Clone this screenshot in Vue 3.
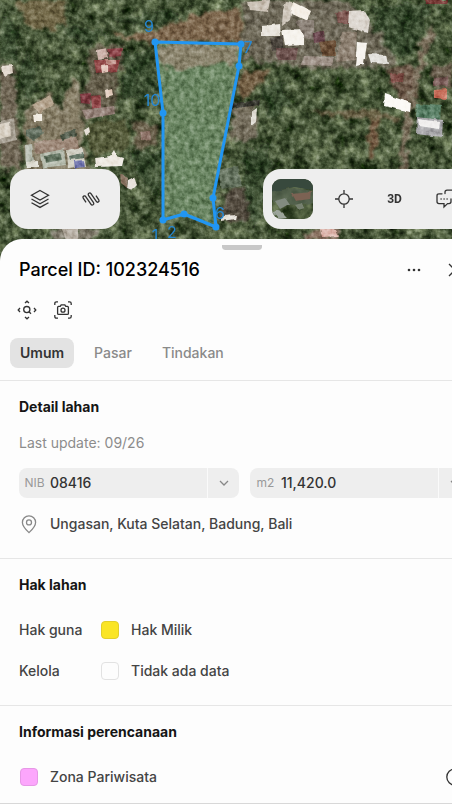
<script setup>
// Parcel detail: satellite map on top, bottom sheet with the land data below.
import { ref } from 'vue'

const tabs = ['Umum', 'Pasar', 'Tindakan']
const activeTab = ref('Umum')

const fields = ref([
  { id: 'nib', label: 'NIB', value: '08416' },
  { id: 'area', label: 'm2', value: '11,420.0' },
])

const rights = [
  { label: 'Hak guna', value: 'Hak Milik', kind: 'yellow' },
  { label: 'Kelola', value: 'Tidak ada data', kind: 'empty' },
]

// open ground and roads
const ground = [
  { d: 'M18 0H64L66 24L52 30L30 28L20 16Z', c: '#77694a' },
  { d: 'M110 36L150 33L190 16L240 8L243 42L156 42L128 40Z', c: '#85674f' },
  { d: 'M0 66L12 64L18 120L22 170L0 168Z', c: '#77695a' },
  { d: 'M30 105L50 94L60 108L74 76L80 90L84 150L92 172L26 172L24 130Z', c: '#8d806b' },
  { d: 'M88 48L124 42L122 66L114 86L116 112L84 120L78 98L90 84Z', c: '#655a48' },
  { d: 'M86 122L126 120L130 148L92 158Z', c: '#595b3b' },
  { d: 'M132 120L156 126L158 146L136 150Z', c: '#6a5b4a' },
  { d: 'M242 2L300 0L350 2L380 36L396 66L352 68L300 68L244 58Z', c: '#736a5c' },
  { d: 'M240 72L272 69L262 82L246 98L238 96Z', c: '#765b43' },
  { d: 'M234 106L258 104L256 138L230 142Z', c: '#7d7264' },
  { d: 'M226 190L246 188L248 222L222 222Z', c: '#55483f' },
  { d: 'M306 112L372 110L400 114L402 120L334 117Z', c: '#6c5f44' },
  { d: 'M370 118L380 116L376 150L368 162Z', c: '#76573f' },
  { d: 'M386 68L414 66L420 98L398 100Z', c: '#6f5748' },
  { d: 'M424 32L436 26L420 76L412 114L406 172L398 172L405 116L414 74Z', c: '#857463' },
  { d: 'M432 66L452 64V88L436 90Z', c: '#6e5d50' },
  { d: 'M50 229H100L94 240H56Z', c: '#8a8176' },
  { d: 'M312 229H340L338 240H306Z', c: '#947468' },
]

// denser, darker trees
const shade = [
  'M0 20L16 18L18 60L0 62Z',
  'M20 64L28 50L40 88L30 100L20 90Z',
  'M64 26L110 30L90 44L66 34Z',
  'M122 54L152 48L158 88L150 110L124 96Z',
  'M128 150L160 150L160 200L136 172Z',
  'M372 6L430 4L424 30L410 56L392 58L376 30Z',
  'M260 92L280 78L290 104L272 120Z',
  'M246 150L268 142L270 170L258 230L244 210Z',
  'M180 20L140 28L110 20L170 10Z',
]

const roofs = [
  { d: 'M2 66L12 65L13 73L4 76Z', c: '#dfd6cb' },
  { d: 'M0 121L14 118L16 140L0 144Z', c: '#a8a194' },
  { d: 'M0 124L10 122L11 136L0 139Z', c: '#d7cfc2' },
  { d: 'M32 106L50 95L54 104L40 113Z', c: '#b3a28c' },
  { d: 'M33 114L42 113L42 121L34 121Z', c: '#eee8dd' },
  { d: 'M26 130L40 126L44 134L34 140L26 137Z', c: '#5d6a5a' },
  { d: 'M34 142L76 137L80 150L36 154Z', c: '#9c8777' },
  { d: 'M40 154L64 149L66 165L42 168Z', c: '#b4baac' },
  { d: 'M44 156L60 153L62 160L45 163Z', c: '#5e705d' },
  { d: 'M67 150L82 147L86 166L68 168Z', c: '#d0cec2' },
  { d: 'M69 156L83 153L84 158L70 160Z', c: '#67796b' },
  { d: 'M74 161L84 160L85 167L75 168Z', c: '#666aa5' },
  { d: 'M25 145L32 144L34 162L26 166Z', c: '#b5baae' },
  { d: 'M26 162L38 161V168H27Z', c: '#dedcd2' },
  { d: 'M60 134L76 129L77 136L62 140Z', c: '#4c5544' },
  { d: 'M95 158L110 156L114 150L117 156L124 158L122 166L96 167Z', c: '#eee9e2' },
  { d: 'M97 50L106 48L108 58L98 60Z', c: '#cfb5ad' },
  { d: 'M107 49L122 48L121 56L109 57Z', c: '#884044' },
  { d: 'M94 60L120 60L117 71L96 73Z', c: '#93494a' },
  { d: 'M101 66L108 65L108 72L102 73Z', c: '#e0c2b7' },
  { d: 'M106 60L116 60L116 64L108 65Z', c: '#bf8f87' },
  { d: 'M80 94L91 93L90 104L81 103Z', c: '#803a42' },
  { d: 'M91 96L101 95L101 108L92 109Z', c: '#91474a' },
  { d: 'M105 91L112 89L113 96L106 98Z', c: '#e3cfc1' },
  { d: 'M82 110L114 106L115 114L86 119Z', c: '#927f76' },
  { d: 'M84 130L89 127L90 132L86 136Z', c: '#e4ddd4' },
  { d: 'M128 180L134 177L137 185L132 190L127 188Z', c: '#e6dfd9' },
  { d: 'M120 174L128 178L127 188L121 183Z', c: '#806a58' },
  { d: 'M140 132L150 131L151 140L142 141Z', c: '#8b6f65' },
  { d: 'M248 2L270 0L268 12L250 10Z', c: '#c8bfb3' },
  { d: 'M286 2L293 3L290 20L282 26L283 10Z', c: '#cfc7bc' },
  { d: 'M293 2L311 11L307 21L290 13Z', c: '#f5efe6' },
  { d: 'M262 26L280 24L281 36L262 36Z', c: '#e8e4dc' },
  { d: 'M282 30L304 29L304 44L285 45Z', c: '#f5f2ec' },
  { d: 'M270 38L283 36L283 48L273 50Z', c: '#4c443d' },
  { d: 'M296 20L314 20L314 40L304 38Z', c: '#8a8076' },
  { d: 'M313 32L324 31L325 42L314 43Z', c: '#654248' },
  { d: 'M319 42L336 40L336 56L322 56Z', c: '#694d35' },
  { d: 'M336 12L350 11L348 24L338 24Z', c: '#7c5550' },
  { d: 'M349 11L364 10L370 20L368 33L348 27Z', c: '#dcd6cf' },
  { d: 'M342 32L357 31L355 60L336 62Z', c: '#8d8071' },
  { d: 'M357 42L367 43L364 64L355 66Z', c: '#f6f3ee' },
  { d: 'M368 54L386 55L388 64L371 63Z', c: '#e2e0db' },
  { d: 'M304 56L334 57L332 66L302 65Z', c: '#9d9086' },
  { d: 'M276 48L298 48L296 60L278 60Z', c: '#6b4f4b' },
  { d: 'M385 94L411 103L410 112L384 106Z', c: '#fbf9f5' },
  { d: 'M390 74L404 73L403 82L391 82Z', c: '#7a4a42' },
  { d: 'M417 104L441 106L440 120L416 117Z', c: '#52795e' },
  { d: 'M417 117L443 120L442 137L416 134Z', c: '#aaa9ac' },
  { d: 'M418 119L440 122L439 129L419 126Z', c: '#f0eeed' },
  { d: 'M434 90L447 89L447 99L434 98Z', c: '#c8705c' },
  { d: 'M434 78L448 77L448 86L434 86Z', c: '#715350' },
  { d: 'M424 0H448L446 4H426Z', c: '#6e302e' },
  { d: 'M251 112L257 108L256 122L251 126Z', c: '#dfdbd3' },
  { d: 'M226 104L260 100L259 105L230 109Z', c: '#31302a' },
  { d: 'M218 170L238 166L242 186L222 190Z', c: '#64715d' },
  { d: 'M222 216L236 215L235 219L222 221Z', c: '#e5e0d8' },
  { d: 'M320 229L334 229L339 236L322 237Z', c: '#ddb7ae' },
  { d: 'M62 229L78 229L78 240L66 240Z', c: '#b5ada2' },
]

const parcel = [
  [155, 42],
  [241, 44],
  [239, 66],
  [213, 198],
  [216, 227],
  [184, 214],
  [163, 220],
  [163, 113],
]
const outline = parcel.map((p) => p.join(',')).join(' ')

const vertexLabels = [
  { n: '9', x: 149, y: 32 },
  { n: '7', x: 248, y: 53 },
  { n: '10', x: 152, y: 106 },
  { n: '1', x: 155, y: 241 },
  { n: '2', x: 172, y: 238 },
  { n: '6', x: 220, y: 219 },
]
</script>

<template>
  <div class="screen">
    <div class="canvas">
      <div class="map">
        <svg class="satellite" viewBox="0 0 452 262" preserveAspectRatio="xMidYMin slice" aria-hidden="true">
          <defs>
            <filter id="canopy" x="0" y="0" width="100%" height="100%" color-interpolation-filters="sRGB">
              <feTurbulence type="fractalNoise" baseFrequency="0.075" numOctaves="4" seed="7" />
              <feColorMatrix values="0.7 0 0 0 -0.08  0.7 0 0 0 -0.02  0.6 0 0 0 -0.09  0 0 0 0 1" />
              <feGaussianBlur stdDeviation="0.7" />
            </filter>
            <filter id="grain" x="0" y="0" width="100%" height="100%" color-interpolation-filters="sRGB">
              <feTurbulence type="fractalNoise" baseFrequency="0.2" numOctaves="3" seed="3" />
              <feColorMatrix values="1 0 0 0 0.03  1 0 0 0 0.03  1 0 0 0 0.03  0 0 0 0 1" />
            </filter>
            <filter id="rough" x="0" y="0" width="100%" height="100%">
              <feTurbulence type="fractalNoise" baseFrequency="0.1" numOctaves="3" seed="5" result="n" />
              <feDisplacementMap in="SourceGraphic" in2="n" scale="14" xChannelSelector="R" yChannelSelector="G" />
              <feGaussianBlur stdDeviation="1.2" />
            </filter>
            <filter id="soft" x="0" y="0" width="100%" height="100%">
              <feTurbulence type="fractalNoise" baseFrequency="0.1" numOctaves="2" seed="2" result="n" />
              <feDisplacementMap in="SourceGraphic" in2="n" scale="3" xChannelSelector="R" yChannelSelector="G" />
              <feGaussianBlur stdDeviation="0.7" />
            </filter>
          </defs>
          <rect width="452" height="262" filter="url(#canopy)" />
          <g filter="url(#rough)" opacity="0.85">
            <rect width="452" height="262" fill="none" />
            <path v-for="s in shade" :key="s" :d="s" fill="#1d2b1d" fill-opacity="0.45" />
            <path v-for="g in ground" :key="g.d" :d="g.d" :fill="g.c" />
          </g>
          <g filter="url(#soft)">
            <rect width="452" height="262" fill="none" />
            <path v-for="r in roofs" :key="r.d" :d="r.d" :fill="r.c" />
          </g>
          <polygon :points="outline" fill="#6c8864" fill-opacity="0.9" />
          <path class="bare" d="M157 44L240 45L236 66L200 62L180 72L160 66Z" filter="url(#rough)" />
          <rect class="grain" width="452" height="262" filter="url(#grain)" />
          <polygon class="outline" :points="outline" />
          <circle v-for="p in parcel" :key="p.join()" :cx="p[0]" :cy="p[1]" r="3.5" fill="#2196f3" />
          <text v-for="v in vertexLabels" :key="v.n" class="vertex" :x="v.x" :y="v.y">{{ v.n }}</text>
        </svg>

        <div class="toolbars">
          <div class="toolbar">
            <button type="button" class="tool" aria-label="Layer">
              <svg width="20" height="20" viewBox="0 0 20 20">
                <path d="M10 1.5L18.5 6.2L10 11L1.5 6.2ZM1.5 10L10 14.7L18.5 10M1.5 13.7L10 18.4L18.5 13.7" />
              </svg>
            </button>
            <button type="button" class="tool" aria-label="Ukur">
              <svg width="20" height="20" viewBox="0 0 20 20">
                <path
                  transform="rotate(-34 10 10)"
                  d="M4 10V5A1.5 1.5 0 0 1 7 5V14.5A1.5 1.5 0 0 0 10 14.5V5.5A1.5 1.5 0 0 1 13 5.5V15A1.5 1.5 0 0 0 16 15V10"
                />
              </svg>
            </button>
          </div>

          <div class="toolbar">
            <button type="button" class="tool basemap" aria-label="Peta dasar">
              <svg width="41" height="41" viewBox="0 0 41 41">
                <rect width="41" height="41" filter="url(#canopy)" stroke="none" />
                <g filter="url(#soft)" stroke="none">
                  <path d="M0 0H41V11L22 8L0 13Z" fill="#38483e" />
                  <path d="M0 12L22 9L41 12V24L20 26L0 23Z" fill="#566351" fill-opacity="0.7" />
                  <path d="M20 15L39 13L38 20L24 22Z" fill="#7b6253" />
                  <path d="M3 22L13 19L17 25L8 30Z" fill="#828b80" />
                  <path d="M1 33L7 31L15 39L7 40Z" fill="#9ca49a" />
                  <path d="M22 26L31 24L33 29L26 31Z" fill="#77816f" />
                </g>
              </svg>
            </button>
            <button type="button" class="tool" aria-label="Lokasi saya">
              <svg width="20" height="20" viewBox="0 0 20 20">
                <circle cx="10" cy="10" r="5.2" />
                <path d="M10 1V4.8M10 15.2V19M1 10H4.8M15.2 10H19" />
              </svg>
            </button>
            <button type="button" class="tool three-d">3D</button>
            <button type="button" class="tool" aria-label="Komentar">
              <svg width="22" height="20" viewBox="0 0 22 20" stroke-linecap="round">
                <path d="M7 4.8H4Q2 4.8 2 6.8V12.6Q2 14.6 4 14.6H9V18L12.6 14.6H14Q16 14.6 16 12.6V10" />
                <path d="M10 4.6V3.2Q10 1.2 12 1.2H19Q21 1.2 21 3.2V9Q21 11 19 11H18.6" />
                <path d="M6 10H6.2M9 10H9.2M12 10H12.2" />
              </svg>
            </button>
          </div>
        </div>
      </div>

      <main class="sheet">
        <div class="handle"></div>
        <header class="head">
          <h1>Parcel ID: 102324516</h1>
          <button type="button" class="icon-btn" aria-label="Menu">
            <svg width="16" height="16" viewBox="0 0 16 16">
              <g fill="#333" stroke="none">
                <circle cx="3" cy="8" r="1.3" />
                <circle cx="8" cy="8" r="1.3" />
                <circle cx="13" cy="8" r="1.3" />
              </g>
            </svg>
          </button>
          <button type="button" class="icon-btn" aria-label="Tutup">
            <svg width="16" height="16" viewBox="0 0 16 16"><path d="M2 2L14 14M14 2L2 14" /></svg>
          </button>
        </header>

        <div class="actions">
          <button type="button" class="icon-btn" aria-label="Perbesar ke lahan">
            <svg width="20" height="20" viewBox="0 0 20 20">
              <circle cx="9.8" cy="9.6" r="3.1" />
              <path d="M12 11.8L14 13.8M8 3L10 1.2L12 3M8 17L10 18.8L12 17M3 8L1.2 10L3 12M17 8L18.8 10L17 12" />
            </svg>
          </button>
          <button type="button" class="icon-btn" aria-label="Ambil gambar">
            <svg width="20" height="20" viewBox="0 0 20 20">
              <path d="M1.8 5V3.4Q1.8 1.8 3.4 1.8H5M15 1.8H16.6Q18.2 1.8 18.2 3.4V5M18.2 15V16.6Q18.2 18.2 16.6 18.2H15M5 18.2H3.4Q1.8 18.2 1.8 16.6V15" />
              <path d="M4.6 7.4Q4.6 6.4 5.6 6.4H7.2L8.2 4.8H11.8L12.8 6.4H14.4Q15.4 6.4 15.4 7.4V13.4Q15.4 14.4 14.4 14.4H5.6Q4.6 14.4 4.6 13.4Z" />
              <circle cx="10" cy="10.2" r="2" />
            </svg>
          </button>
        </div>

        <nav class="tabs">
          <button
            v-for="t in tabs"
            :key="t"
            type="button"
            class="tab"
            :class="{ active: t === activeTab }"
            @click="activeTab = t"
          >{{ t }}</button>
        </nav>

        <section class="section">
          <h2>Detail lahan</h2>
          <p class="updated">Last update: 09/26</p>
          <div class="fields">
            <div v-for="f in fields" :key="f.id" class="field">
              <label :for="f.id">{{ f.label }}</label>
              <input :id="f.id" v-model="f.value" type="text" />
              <button type="button" :aria-label="'Pilih ' + f.label">
                <svg width="10" height="6" viewBox="0 0 10 6"><path d="M1 1L5 5L9 1" /></svg>
              </button>
            </div>
          </div>
          <p class="line">
            <svg class="pin" width="20" height="20" viewBox="0 0 20 20">
              <path d="M10 18.6C6.6 15.4 3.4 12.2 3.4 8.4A6.6 6.6 0 0 1 16.6 8.4C16.6 12.2 13.4 15.4 10 18.6Z" />
              <circle cx="10" cy="8.4" r="2.5" />
            </svg>
            <span>Ungasan, Kuta Selatan, Badung, Bali</span>
          </p>
        </section>

        <section class="section">
          <h2>Hak lahan</h2>
          <dl class="rows">
            <div v-for="r in rights" :key="r.label" class="row">
              <dt>{{ r.label }}</dt>
              <dd class="line"><i class="swatch" :class="r.kind"></i>{{ r.value }}</dd>
            </div>
          </dl>
        </section>

        <section class="section">
          <h2>Informasi perencanaan</h2>
          <div class="rows">
            <div class="line">
              <i class="swatch pink"></i>
              <span class="grow">Zona Pariwisata</span>
              <button type="button" class="icon-btn info" aria-label="Info zona">
                <svg width="20" height="20" viewBox="0 0 20 20">
                  <circle cx="10" cy="10" r="8.2" />
                  <path d="M10 9V14.4M10 5.8V7" />
                </svg>
              </button>
            </div>
          </div>
        </section>
      </main>
    </div>
  </div>
</template>

<style>
body {
  background: #fdfdfd;
}
</style>

<style scoped>
.screen {
  overflow: hidden;
  min-height: 100vh;
}

/* slightly wider than the viewport, runs off the right edge */
.canvas {
  width: calc(100% + 32px);
  color: #444;
  font-family: Inter, 'Liberation Sans', sans-serif;
  font-size: 14px;
  line-height: 20px;
}

h1,
h2,
p,
dl,
dd {
  margin: 0;
}

button,
input {
  font: inherit;
  color: inherit;
  border: 0;
  padding: 0;
  background: none;
}

svg {
  display: block;
  flex: none;
  fill: none;
  stroke: #333;
  stroke-width: 1.3;
}

.map {
  display: grid;
  height: 262px;
  overflow: hidden;
  background: #3c4834;
}

.satellite {
  grid-area: 1 / 1;
  width: calc(100% - 32px);
  height: 262px;
  stroke: none;
}

.bare {
  fill: #93826f;
  fill-opacity: 0.75;
}

.grain {
  mix-blend-mode: soft-light;
}

.outline {
  stroke: #2196f3;
  stroke-width: 3;
  stroke-linejoin: round;
}

.vertex {
  fill: #2587d3;
  font-size: 16px;
  text-anchor: middle;
}

.toolbars {
  grid-area: 1 / 1;
  z-index: 1;
  display: flex;
  justify-content: space-between;
  align-items: flex-start;
  padding: 169px 9px 0 10px;
}

.toolbar {
  display: flex;
  gap: 10px;
  padding: 10px 9px;
  border-radius: 18px;
  background: #eee;
}

.tool {
  display: grid;
  place-items: center;
  width: 41px;
  height: 40px;
}

.basemap {
  overflow: hidden;
  border-radius: 9px;
}

.three-d {
  font-family: Roboto, sans-serif;
  font-size: 12px;
  font-weight: 700;
  color: #333;
}

.sheet {
  position: relative;
  z-index: 2;
  margin-top: -23px;
  border-radius: 22px 22px 0 0;
  background: #fdfdfd;
}

.handle {
  width: 40px;
  height: 5px;
  margin: 0 auto;
  border-top: 6px solid transparent;
  border-radius: 3px;
  background: #c8c8c8 padding-box;
}

.head {
  display: flex;
  align-items: center;
  gap: 25px;
  padding: 10px 21px 0 19px;
}

h1 {
  flex: 1;
  font-size: 18px;
  font-weight: 500;
  line-height: 20px;
  color: #000;
}

.icon-btn {
  display: grid;
  place-items: center;
  height: 20px;
}

.actions {
  display: flex;
  gap: 16px;
  padding: 20px 17px 0;
}

.tabs {
  display: flex;
  gap: 10px;
  padding: 18px 10px 12px;
}

.tab {
  height: 30px;
  padding: 0 10px;
  border-radius: 8px;
  font-weight: 500;
  color: #8a8a8a;
}

.tab.active {
  background: #e3e3e3;
  color: #333;
  font-weight: 600;
}

.section {
  padding: 16px 14px 24px 19px;
  border-top: 1px solid #e6e6e6;
}

.section:last-child {
  padding-bottom: 16px;
  border-bottom: 1px solid #d8d8d8;
}

h2 {
  font-size: 14px;
  font-weight: 700;
  line-height: 20px;
  color: #151515;
}

.updated {
  margin-top: 16px;
  color: #8c8c8c;
}

.fields {
  display: grid;
  grid-template-columns: repeat(2, minmax(0, 1fr));
  gap: 11px;
  margin: 15px 0 16px;
}

.field {
  display: flex;
  align-items: center;
  height: 30px;
  border-radius: 8px;
  background: #eee;
}

.field label {
  flex: none;
  width: 31px;
  font-size: 12px;
  text-align: center;
  color: #999;
}

.field input {
  flex: 1;
  min-width: 0;
  font-weight: 500;
  color: #333;
}

.field button {
  display: grid;
  flex: none;
  place-items: center;
  width: 32px;
  height: 30px;
  border-left: 1px solid #fafafa;
}

.field svg,
.pin {
  stroke: #888;
}

.line {
  display: flex;
  align-items: center;
  gap: 11px;
  font-weight: 500;
}

.rows {
  display: grid;
  gap: 21px;
  margin-top: 25px;
}

.row {
  display: flex;
}

dt {
  width: 81px;
  font-weight: 500;
}

.grow {
  flex: 1;
}

.info {
  margin-right: 5px;
}

.swatch {
  box-sizing: border-box;
  width: 18px;
  height: 18px;
  margin: 0 1px;
  border: 1px solid #e2e2e2;
  border-radius: 4px;
}

.swatch.yellow {
  border-color: #e2cf2a;
  background: #fae525;
}

.swatch.pink {
  border-color: #e698e6;
  background: #fca6fc;
}
</style>
